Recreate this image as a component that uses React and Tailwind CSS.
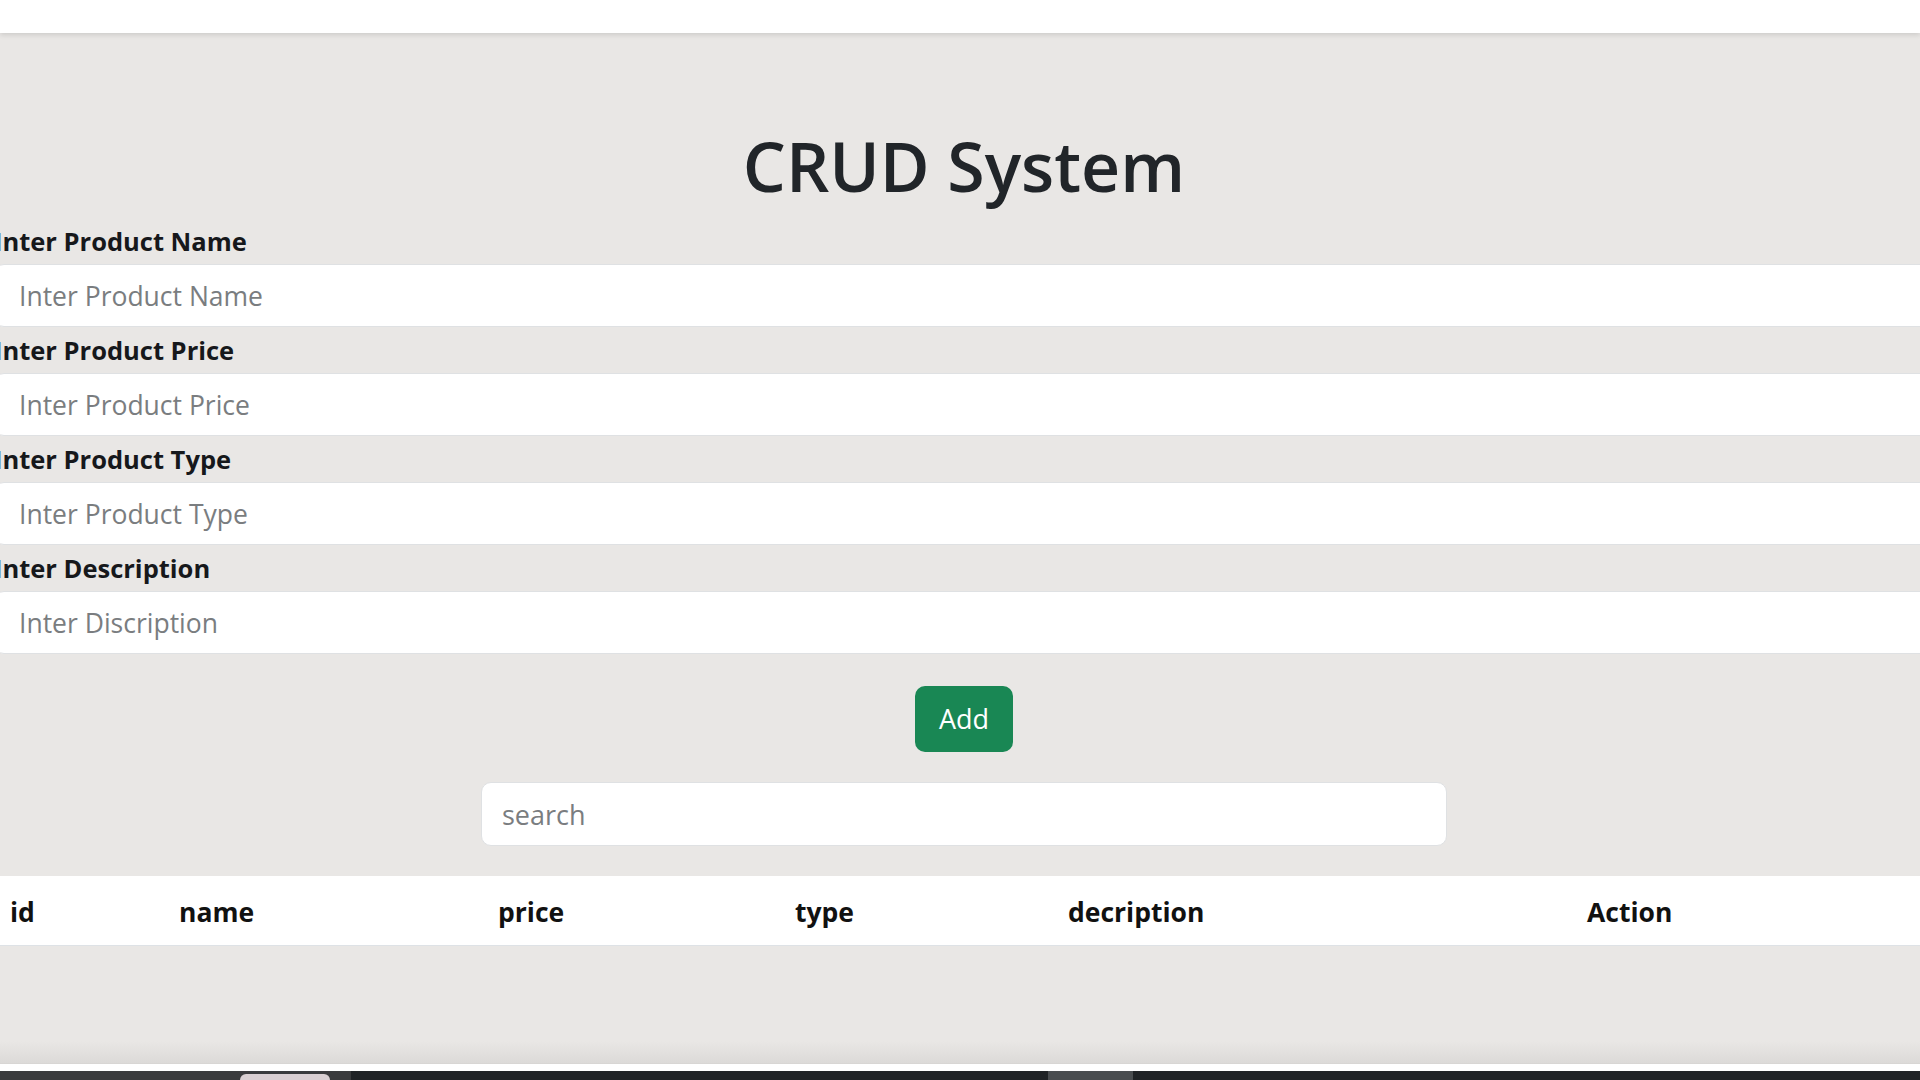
import React from "react";

const fields = [
  { label: "Inter Product Name", placeholder: "Inter Product Name" },
  { label: "Inter Product Price", placeholder: "Inter Product Price" },
  { label: "Inter Product Type", placeholder: "Inter Product Type" },
  { label: "Inter Description", placeholder: "Inter Discription" },
];

const columns = ["id", "name", "price", "type", "decription", "Action"];

export default function App() {
  return (
    <div
      className="h-screen w-full overflow-hidden flex flex-col bg-[#e9e7e5]"
      style={{ fontFamily: '"Open Sans", "Noto Sans", sans-serif' }}
    >
      {/* top strip */}
      <div className="h-[33px] shrink-0 bg-white shadow-[0_2px_5px_rgba(0,0,0,0.12)] relative z-10" />

      <main className="flex-1 relative">
        <div className="ml-[-6px] w-[1940px] pt-[90px]">
          <h1 className="text-center text-[68px] leading-[86px] font-semibold text-[#212529] mb-[9px]">
            CRUD System
          </h1>

          <form onSubmit={(e) => e.preventDefault()}>
            {fields.map((f) => (
              <div key={f.label}>
                <label className="block text-[25.5px] leading-[46px] font-bold text-[#16181b]">
                  {f.label}
                </label>
                <input
                  type="text"
                  placeholder={f.placeholder}
                  className="block w-full h-[63px] px-[24px] bg-white rounded-[10px] border border-[#dfe1e3] text-[26.5px] text-[#212529] placeholder:text-[#7a7d80] outline-none"
                />
              </div>
            ))}

            <div className="flex justify-center mt-[32px]">
              <button
                type="submit"
                className="w-[98px] h-[66px] rounded-[10px] bg-[#198754] text-white text-[27px]"
              >
                Add
              </button>
            </div>

            <div className="flex justify-center mt-[30px]">
              <input
                type="text"
                placeholder="search"
                className="w-[966px] h-[64px] px-[20px] bg-white rounded-[10px] border border-[#dfe1e3] text-[27px] text-[#212529] placeholder:text-[#7a7d80] outline-none"
              />
            </div>
          </form>

          <div className="mt-[30px] bg-white h-[70px] pt-[4px] border-b border-[#dee2e6] grid grid-cols-[173px_319px_297px_273px_519px_1fr] items-center">
            {columns.map((c, i) => (
              <div
                key={c}
                className={
                  "text-[26.5px] font-bold text-[#111] " + (i === 0 ? "pl-4" : "pl-3")
                }
              >
                {c}
              </div>
            ))}
          </div>
        </div>

        <div className="absolute left-0 right-0 bottom-0 h-[22px] bg-gradient-to-b from-[#e9e7e5] to-[#dcdad8]" />
      </main>

      {/* bottom strip */}
      <div className="h-[8px] shrink-0 bg-white border-t border-[#d8d6d4]" />
      <div className="h-[9px] shrink-0 flex">
        <div className="w-[351px] bg-[#3a3b3d] flex items-end">
          <div className="ml-[240px] w-[90px] h-[6px] rounded-t-full bg-[#d9cfd2]" />
        </div>
        <div className="w-[697px] bg-[#202326]" />
        <div className="w-[85px] bg-[#4a4d50]" />
        <div className="flex-1 bg-[#202326]" />
      </div>
    </div>
  );
}
